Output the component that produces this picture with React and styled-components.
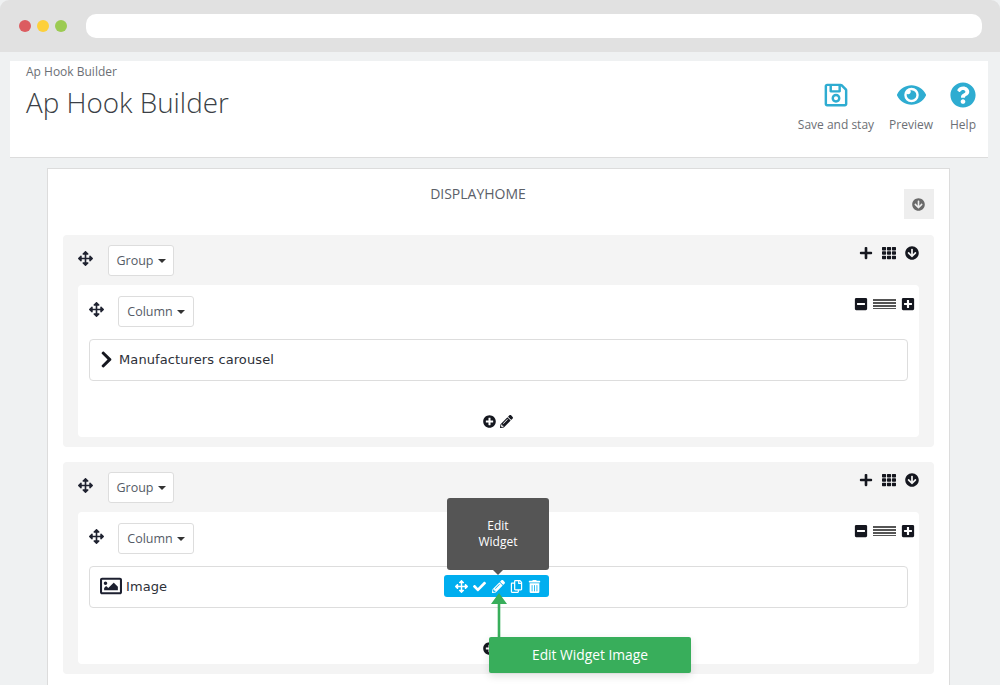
import styled, { createGlobalStyle } from "styled-components";
import {
  FaArrowsAlt,
  FaRegSave,
  FaEye,
  FaQuestionCircle,
  FaArrowCircleDown,
  FaPlus,
  FaTh,
  FaMinusSquare,
  FaPlusSquare,
  FaChevronRight,
  FaPlusCircle,
  FaPencilAlt,
  FaCheck,
  FaRegCopy,
  FaTrashAlt,
  FaRegImage,
} from "react-icons/fa";

const GlobalStyle = createGlobalStyle`
  html, body {
    margin: 0;
    padding: 0;
    background: #fff;
  }
`;

const Page = styled.div`
  width: 1000px;
  height: 685px;
  overflow: hidden;
  background: #eff1f2;
  font-family: "Open Sans", sans-serif;
  display: flex;
  flex-direction: column;
`;

const Chrome = styled.div`
  height: 52px;
  flex: none;
  background: #e1e1e1;
  border-radius: 9px 9px 0 0;
  display: flex;
  align-items: center;
  padding: 0 18px 0 19px;
  box-sizing: border-box;
`;

const Dot = styled.span`
  width: 12px;
  height: 12px;
  border-radius: 50%;
  background: ${(p) => p.$color};
  margin-right: 6px;
`;

const AddressBar = styled.div`
  flex: 1;
  height: 24px;
  margin-left: 13px;
  background: #fff;
  border-radius: 10px;
`;

const Header = styled.header`
  flex: none;
  height: 97px;
  margin: 9px 12px 0 10px;
  padding: 3px 12px 0 16px;
  box-sizing: border-box;
  background: #fff;
  border-bottom: 1px solid #dcdcdc;
  display: flex;
  justify-content: space-between;
`;

const Breadcrumb = styled.div`
  font-size: 12px;
  line-height: 16px;
  color: #6c6f75;
`;

const PageTitle = styled.h1`
  margin: 4px 0 0;
  font-size: 27.8px;
  line-height: 36px;
  font-weight: 300;
  color: #3b3f46;
`;

const Actions = styled.div`
  display: flex;
  gap: 15px;
  padding-top: 18px;
`;

const Action = styled.div`
  display: flex;
  flex-direction: column;
  align-items: center;
  font-size: 12px;
  line-height: 16px;
  color: #6c6f75;
  white-space: nowrap;

  svg {
    color: #2eacd1;
    height: 26px;
    margin-bottom: 9px;
  }

  &:last-child {
    margin-left: 2px;
  }
`;

const Panel = styled.section`
  flex: 1;
  margin: 10px 50px 0 47px;
  padding: 20px 15px 0;
  background: #fff;
  border: 1px solid #dcdcdc;
  border-bottom: 0;
  box-sizing: border-box;
`;

const PanelHead = styled.div`
  display: flex;
  align-items: flex-start;
  margin-bottom: 16px;
`;

const PanelTitle = styled.div`
  flex: 1;
  padding-right: 11px;
  margin-top: -4px;
  text-align: center;
  font-size: 14px;
  line-height: 18px;
  color: #5b6068;
`;

const ToggleButton = styled.div`
  width: 30px;
  height: 30px;
  padding-right: 1px;
  box-sizing: border-box;
  background: #eee;
  color: #6a6a6a;
  display: flex;
  align-items: center;
  justify-content: center;
  font-size: 13px;
`;

const Group = styled.div`
  height: 212px;
  padding: 10px 15px 0;
  margin-bottom: 15px;
  box-sizing: border-box;
  background: #f4f4f4;
  border-radius: 4px;
`;

const Bar = styled.div`
  display: flex;
  align-items: flex-start;
  margin-bottom: ${(p) => p.$gap}px;
`;

const Move = styled(FaArrowsAlt)`
  font-size: 15px;
  color: #1f2230;
  margin-top: 6px;
  margin-right: ${(p) => p.$space}px;
`;

const Dropdown = styled.div`
  height: 31px;
  width: ${(p) => p.$width}px;
  box-sizing: border-box;
  display: flex;
  align-items: center;
  justify-content: center;
  gap: 4px;
  background: #fff;
  border: 1px solid #ddd;
  border-radius: 3px;
  font-size: 12.5px;
  color: #555b66;
`;

const Caret = styled.span`
  width: 0;
  height: 0;
  border-left: 4px solid transparent;
  border-right: 4px solid transparent;
  border-top: 4px solid #333;
  margin-top: 1px;
`;

const Tools = styled.div`
  margin-left: auto;
  display: flex;
  align-items: center;
  height: 16px;
  color: #15171f;

  svg {
    font-size: 14px;
  }
`;

const GroupTools = styled(Tools)`
  gap: 9px;
  margin-right: 0;
`;

const ColumnTools = styled(Tools)`
  gap: 5px;
  margin-right: -7px;
`;

const Lines = styled.span`
  width: 23px;
  height: 10px;
  background: repeating-linear-gradient(#555 0 2px, #fff 2px 3px);
`;

const Column = styled.div`
  position: relative;
  height: 152px;
  padding: 11px 11px 0;
  box-sizing: border-box;
  background: #fff;
  border-radius: 4px;
`;

const Widget = styled.div`
  position: relative;
  height: 42px;
  display: flex;
  align-items: center;
  gap: ${(p) => p.$gap}px;
  padding: 0 0 2px ${(p) => p.$left}px;
  box-sizing: border-box;
  border: 1px solid #ddd;
  border-radius: 4px;
  font-family: "DejaVu Sans", sans-serif;
  font-size: 13px;
  letter-spacing: 0.1px;
  color: #2d3038;
`;

const ColumnFoot = styled.div`
  display: flex;
  justify-content: center;
  align-items: center;
  gap: 4px;
  margin-top: 34px;
  padding-right: 2px;
  color: #15171f;
  font-size: 13px;
`;

const Tooltip = styled.div`
  position: absolute;
  left: 357px;
  top: -69px;
  width: 102px;
  height: 72px;
  display: flex;
  align-items: center;
  justify-content: center;
  text-align: center;
  background: #555;
  border-radius: 3px;
  color: #fff;
  font-family: "Open Sans", sans-serif;
  font-size: 12px;
  line-height: 16px;
  letter-spacing: 0;

  &::after {
    content: "";
    position: absolute;
    left: 46px;
    bottom: -5px;
    border-left: 5px solid transparent;
    border-right: 5px solid transparent;
    border-top: 5px solid #555;
  }
`;

const WidgetTools = styled.div`
  position: absolute;
  left: 354px;
  top: 8px;
  width: 105px;
  height: 22px;
  box-sizing: border-box;
  padding-left: 11px;
  display: flex;
  align-items: center;
  gap: 5px;
  background: #00aeef;
  border-radius: 3px;
  color: #fff;
  font-size: 13px;

  svg:nth-child(2) {
    margin-right: 1px;
  }
`;

const Arrow = styled.svg`
  position: absolute;
  left: 413px;
  top: 81px;
`;

const Callout = styled.div`
  position: absolute;
  left: 411px;
  top: 125px;
  width: 202px;
  height: 36px;
  padding-bottom: 2px;
  box-sizing: border-box;
  display: flex;
  align-items: center;
  justify-content: center;
  background: #38ae5b;
  border-radius: 2px;
  box-shadow: 0 3px 8px rgba(0, 0, 0, 0.12);
  color: #fff;
  font-size: 13.8px;
`;

const GroupBlock = ({ children }) => (
  <Group>
    <Bar $gap={9}>
      <Move $space={15} />
      <Dropdown $width={66}>
        Group <Caret />
      </Dropdown>
      <GroupTools>
        <FaPlus />
        <FaTh />
        <FaArrowCircleDown />
      </GroupTools>
    </Bar>
    {children}
  </Group>
);

const ColumnBar = () => (
  <Bar $gap={12}>
    <Move $space={14} />
    <Dropdown $width={76}>
      Column <Caret />
    </Dropdown>
    <ColumnTools>
      <FaMinusSquare />
      <Lines />
      <FaPlusSquare />
    </ColumnTools>
  </Bar>
);

const Foot = () => (
  <ColumnFoot>
    <FaPlusCircle />
    <FaPencilAlt />
  </ColumnFoot>
);

export default function App() {
  return (
    <Page>
      <GlobalStyle />
      <Chrome>
        <Dot $color="#dc5c60" />
        <Dot $color="#fdd03b" />
        <Dot $color="#9ccb52" />
        <AddressBar />
      </Chrome>
      <Header>
        <div>
          <Breadcrumb>Ap Hook Builder</Breadcrumb>
          <PageTitle>Ap Hook Builder</PageTitle>
        </div>
        <Actions>
          <Action>
            <FaRegSave size={26} />
            Save and stay
          </Action>
          <Action>
            <FaEye size={29} />
            Preview
          </Action>
          <Action>
            <FaQuestionCircle size={26} />
            Help
          </Action>
        </Actions>
      </Header>
      <Panel>
        <PanelHead>
          <PanelTitle>DISPLAYHOME</PanelTitle>
          <ToggleButton>
            <FaArrowCircleDown />
          </ToggleButton>
        </PanelHead>
        <GroupBlock>
          <Column>
            <ColumnBar />
            <Widget $left={7} $gap={3}>
              <FaChevronRight size={19} color="#15171f" />
              Manufacturers carousel
            </Widget>
            <Foot />
          </Column>
        </GroupBlock>
        <GroupBlock>
          <Column>
            <ColumnBar />
            <Widget $left={10} $gap={4}>
              <FaRegImage size={22} color="#1d2030" />
              Image
              <Tooltip>
                Edit
                <br />
                Widget
              </Tooltip>
              <WidgetTools>
                <FaArrowsAlt />
                <FaCheck />
                <FaPencilAlt />
                <FaRegCopy />
                <FaTrashAlt />
              </WidgetTools>
            </Widget>
            <Foot />
            <Arrow width="16" height="44" viewBox="0 0 16 44">
              <path d="M8 0 L16 11 L9.3 11 L9.3 44 L6.7 44 L6.7 11 L0 11 Z" fill="#38ae5b" />
            </Arrow>
            <Callout>Edit Widget Image</Callout>
          </Column>
        </GroupBlock>
      </Panel>
    </Page>
  );
}
